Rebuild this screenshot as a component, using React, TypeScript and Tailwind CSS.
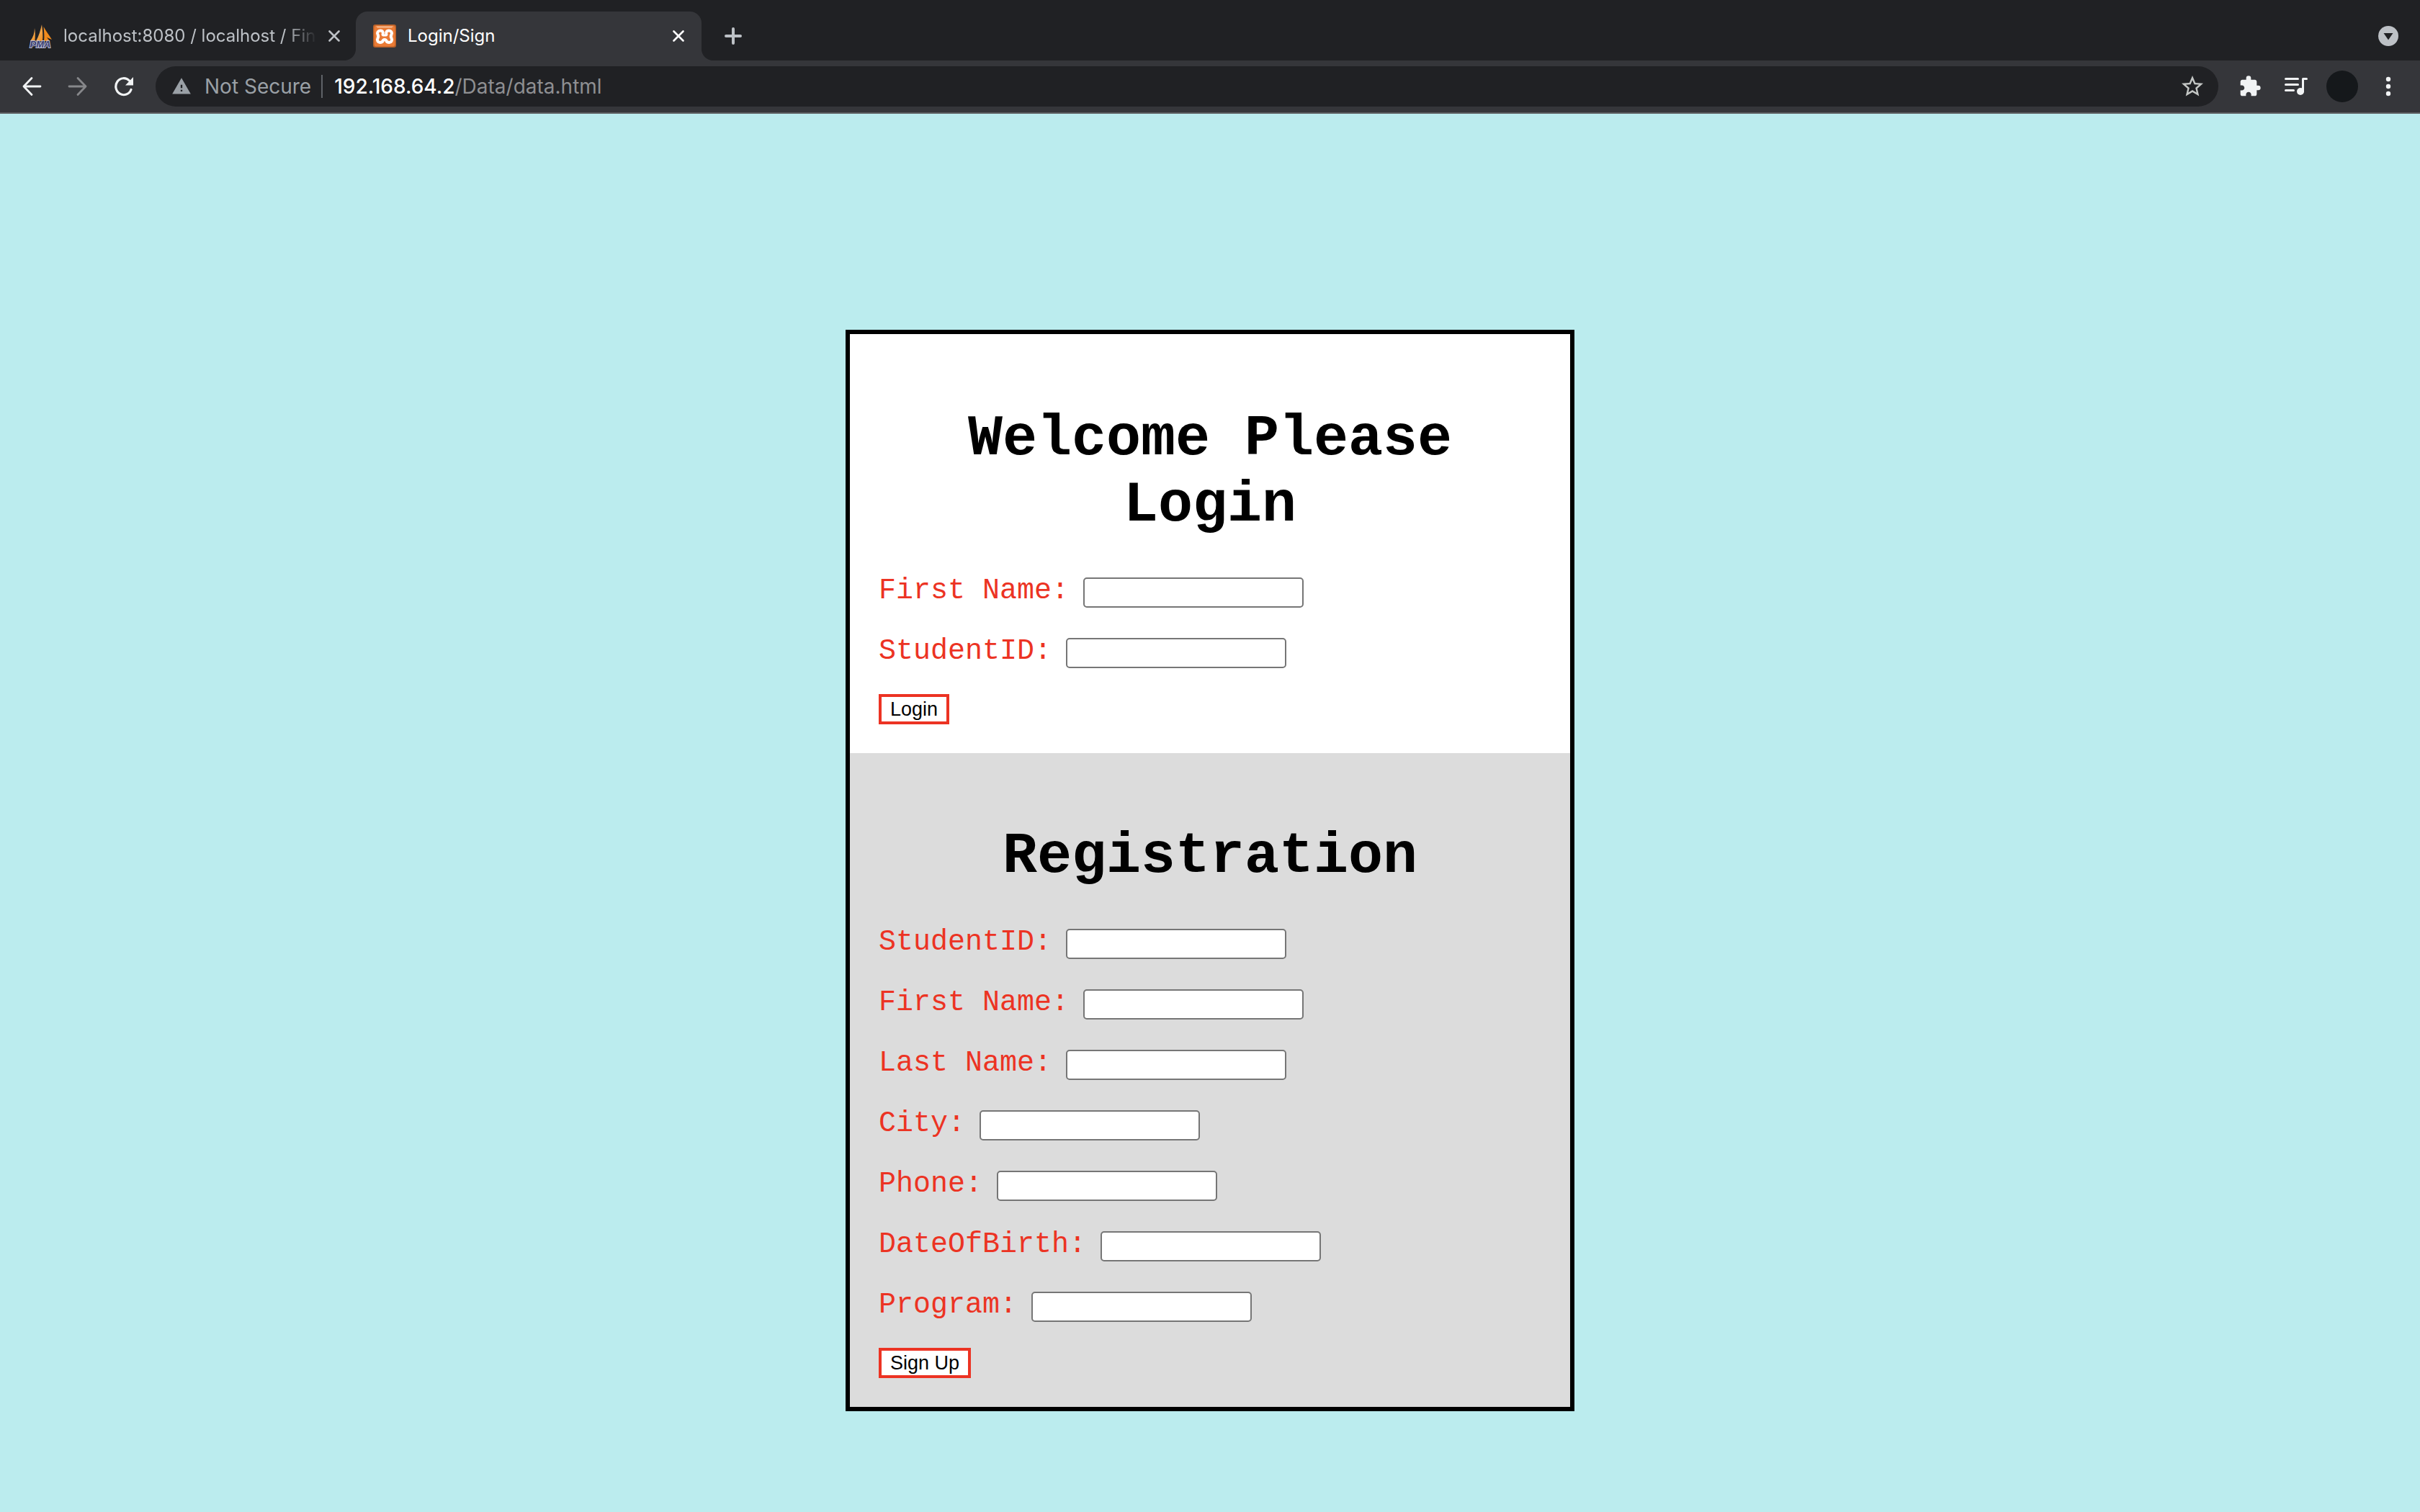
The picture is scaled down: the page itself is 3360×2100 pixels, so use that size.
import React, { useId } from 'react';
import { MdExtension, MdStarBorder, MdWarning } from 'react-icons/md';

function PmaIcon() {
  return (
    <svg viewBox="0 0 32 32" className="size-8 shrink-0 overflow-visible" aria-hidden="true">
      <defs>
        <linearGradient id="sail" x1="0" y1="0" x2="1" y2="1">
          <stop offset="0" stopColor="#b97f42" />
          <stop offset="0.6" stopColor="#f3a547" />
          <stop offset="1" stopColor="#f08a1c" />
        </linearGradient>
      </defs>
      <path d="M8 5C8 12 6 18 2 23h6.500C9 16 9 10 8 5Z" fill="url(#sail)" />
      <path d="M18 0c-2 8-4 16-8 23h9c1-8 0-15-1-23Z" fill="url(#sail)" />
      <path d="M20.500 3c3 6 8 12 11.500 18l-7-3 4 5h-8c1-7 0-13-.5-20Z" fill="#f08a1c" />
      <text
        x="16"
        y="32"
        textAnchor="middle"
        fill="#3b3f73"
        stroke="#b9bcd2"
        strokeWidth="2"
        paintOrder="stroke"
        className="font-['Liberation_Sans'] text-[13px] font-bold italic"
      >
        PMA
      </text>
    </svg>
  );
}

function XamppIcon() {
  return (
    <svg viewBox="0 0 32 32" className="size-8 shrink-0" aria-hidden="true">
      <rect width="32" height="32" rx="3" fill="#b5602a" />
      <rect x="1.500" y="1.500" width="29" height="29" rx="3" fill="#ea7b35" />
      <path d="M4 2.500h24l-2 2H6Z" fill="#f6bf98" />
      <g fill="none" stroke="#fff" strokeWidth="4" strokeLinecap="round" strokeLinejoin="round">
        <path d="M13.500 14c1-3.500-.5-5.500-3.500-5.500s-5 3-3.500 5.500c1.200 2 1.200 3 0 5-1.800 3 .5 6 3 6s4-1.500 4.500-3c.4-1.500 3.600-1.500 4 0 .5 1.500 2 3 4.500 3s4.800-3 3-6c-1.200-2-1.200-3 0-5 1.500-2.500-.5-5.500-3.500-5.500s-4.500 2-3.500 5.500" />
        <path d="M14 15h4" strokeWidth="3" />
      </g>
    </svg>
  );
}

function CloseIcon() {
  return (
    <svg viewBox="0 0 16 16" className="size-4" fill="none" stroke="currentColor" strokeWidth="2.600" strokeLinecap="round">
      <path d="M1.500 1.500l13 13M14.500 1.500l-13 13" />
    </svg>
  );
}

function ArrowIcon({ flip = false }: { flip?: boolean }) {
  return (
    <svg
      viewBox="0 0 28 28"
      className={flip ? 'size-7 rotate-180' : 'size-7'}
      fill="none"
      stroke="currentColor"
      strokeWidth="2.800"
      strokeLinecap="round"
      strokeLinejoin="round"
    >
      <path d="M26 14H3M14 2.500L3 14l11 11.500" />
    </svg>
  );
}

function ReloadIcon() {
  return (
    <svg viewBox="0 0 28 28" className="size-7">
      <path d="M24 18.500A11 11.500 0 1 1 21.500 6" fill="none" stroke="currentColor" strokeWidth="3.200" strokeLinecap="round" />
      <path d="M27 1v11.500H16Z" fill="currentColor" />
    </svg>
  );
}

function QueueIcon() {
  return (
    <svg viewBox="0 0 32 28" className="h-7 w-8" stroke="currentColor" strokeWidth="3" strokeLinecap="round" fill="none">
      <path d="M1.500 3.500h17M1.500 11.500h17M1.500 19.500h11M25.500 21V3.500h5" strokeLinejoin="round" />
      <circle cx="22" cy="21" r="5" fill="currentColor" stroke="none" />
    </svg>
  );
}

function TabStrip() {
  return (
    <div className="flex h-[84px] items-end bg-[#202124] pt-4 pr-[30px]">
      <div className="flex h-full w-[478px] items-center pl-10 text-[#bdc1c6]">
        <PmaIcon />
        <span className="ml-4 w-[352px] overflow-hidden whitespace-nowrap text-2xl [mask-image:linear-gradient(to_right,black_308px,transparent_352px)]">
          localhost:8080 / localhost / Final
        </span>
        <button type="button" aria-label="Close tab" className="ml-4">
          <CloseIcon />
        </button>
      </div>
      <div className="size-4 rounded-br-2xl shadow-[6px_6px_0_4px_#35363a] [clip-path:inset(0)]" />
      <div className="flex h-full w-[480px] items-center rounded-t-2xl bg-[#35363a] px-6 text-white">
        <XamppIcon />
        <span className="ml-4 flex-1 text-2xl">Login/Sign</span>
        <button type="button" aria-label="Close tab">
          <CloseIcon />
        </button>
      </div>
      <div className="size-4 rounded-bl-2xl shadow-[-6px_6px_0_4px_#35363a] [clip-path:inset(0)]" />
      <button type="button" aria-label="New tab" className="ml-4 flex h-full items-center text-[#bdc1c6]">
        <svg viewBox="0 0 24 24" className="size-6" stroke="currentColor" strokeWidth="4" strokeLinecap="round">
          <path d="M2 12h20M12 2v20" />
        </svg>
      </button>
      <button type="button" aria-label="Search tabs" className="ml-auto flex h-full items-center">
        <svg viewBox="0 0 28 28" className="size-7">
          <circle cx="14" cy="14" r="14" fill="#bdc1c6" />
          <path d="M7.500 10h13L14 19.500Z" fill="#202124" />
        </svg>
      </button>
    </div>
  );
}

function Toolbar() {
  return (
    <div className="flex h-[74px] items-center border-b-2 border-[#5d5e61] bg-[#35363a] px-[30px] text-[#f1f3f4]">
      <button type="button" aria-label="Back">
        <ArrowIcon />
      </button>
      <button type="button" aria-label="Forward" className="ml-9 text-[#86878a]">
        <ArrowIcon flip />
      </button>
      <button type="button" aria-label="Reload" className="ml-9">
        <ReloadIcon />
      </button>
      <div className="ml-[30px] flex h-14 flex-1 items-center rounded-full bg-[#202124] pr-[18px] pl-[22px] text-[28px] text-[#9aa0a6]">
        <MdWarning className="size-7" />
        <span className="ml-[18px]">Not Secure</span>
        <div className="ml-[14px] h-8 w-0.5 bg-[#5f6368]" />
        <a href="#" className="ml-4 flex-1 whitespace-nowrap text-[#8e8f92]">
          <span className="font-medium text-white">192.168.64.2</span>/Data/data.html
        </a>
        <button type="button" aria-label="Bookmark this page" className="text-[#c4c7c5]">
          <MdStarBorder className="size-9" />
        </button>
      </div>
      <button type="button" aria-label="Extensions" className="ml-7">
        <MdExtension className="size-8" />
      </button>
      <button type="button" aria-label="Media controls" className="ml-8">
        <QueueIcon />
      </button>
      <button type="button" aria-label="Profile" className="ml-[26px] size-11 rounded-full bg-[#15181b]" />
      <button type="button" aria-label="Menu" className="ml-7">
        <svg viewBox="0 0 28 28" className="size-7" fill="currentColor">
          <circle cx="14" cy="4" r="3.200" />
          <circle cx="14" cy="14" r="3.200" />
          <circle cx="14" cy="24" r="3.200" />
        </svg>
      </button>
    </div>
  );
}

function Field({ label }: { label: string }) {
  const id = useId();
  return (
    <div className="flex h-[42px] items-start gap-5">
      <label htmlFor={id} className="text-[40px] leading-[38px] text-[#ec3323]">
        {label}
      </label>
      <input
        id={id}
        type="text"
        className="h-[42px] w-[306px] rounded-[5px] border-2 border-[#767676] bg-white px-1 font-['Liberation_Sans'] text-[27px]"
      />
    </div>
  );
}

type FormProps = { title: string; fields: string[]; action: string; className: string };

function FormSection({ title, fields, action, className }: FormProps) {
  return (
    <form className={className} onSubmit={(e) => e.preventDefault()}>
      <h1 className="text-center text-[80px] leading-[92px] font-bold">{title}</h1>
      <div className="mt-[54px] flex flex-col gap-[42px]">
        {fields.map((f) => (
          <Field key={f} label={f} />
        ))}
      </div>
      <button
        type="submit"
        className="mt-9 flex h-[42px] items-center border-4 border-[#ec3323] bg-white px-3 font-['Liberation_Sans',sans-serif] text-[27px] leading-[30px]"
      >
        {action}
      </button>
    </form>
  );
}

export default function App() {
  return (
    <div className="flex min-h-screen flex-col bg-[#bbecee]">
      <header className="font-['Inter',sans-serif]">
        <TabStrip />
        <Toolbar />
      </header>
      <main className="mx-auto mt-[300px] w-full max-w-[1012px] border-[6px] border-black font-['Courier_New','Liberation_Mono',monospace] text-black">
        <FormSection
          title="Welcome Please Login"
          fields={['First Name:', 'StudentID:']}
          action="Login"
          className="bg-white px-10 pt-[100px] pb-10"
        />
        <FormSection
          title="Registration"
          fields={['StudentID:', 'First Name:', 'Last Name:', 'City:', 'Phone:', 'DateOfBirth:', 'Program:']}
          action="Sign Up"
          className="bg-[#dcdcdc] px-10 pt-[98px] pb-10"
        />
      </main>
    </div>
  );
}
